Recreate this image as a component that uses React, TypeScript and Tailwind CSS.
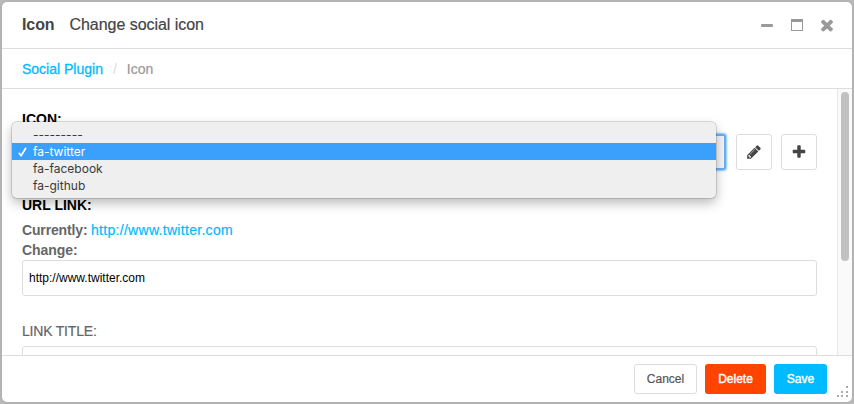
import { type ReactNode } from 'react'

const options = ['---------', 'fa-twitter', 'fa-facebook', 'fa-github']
const selected = 'fa-twitter'

const icons = {
  pencil:
    'M491 1536l91-91-235-235-91 91v107h128v128h107zm523-928q0-22-22-22-10 0-17 7l-542 542q-7 7-7 17 0 22 22 22 10 0 17-7l542-542q7-7 7-17zm-54-192l416 416-832 832h-416v-416zm683 96q0 53-37 90l-166 166-416-416 166-165q36-38 90-38 53 0 91 38l235 234q37 39 37 91z',
  plus: 'M1600 736v192q0 40-28 68t-68 28h-416v416q0 40-28 68t-68 28h-192q-40 0-68-28t-28-68v-416h-416q-40 0-68-28t-28-68v-192q0-40 28-68t68-28h416v-416q0-40 28-68t68-28h192q40 0 68 28t28 68v416h416q40 0 68 28t28 68z',
  times:
    'M1490 1322q0 40-28 68l-136 136q-28 28-68 28t-68-28l-294-294-294 294q-28 28-68 28t-68-28l-136-136q-28-28-28-68t28-68l294-294-294-294q-28-28-28-68t28-68l136-136q28-28 68-28t68 28l294 294 294-294q28-28 68-28t68 28l136 136q28 28 28 68t-28 68l-294 294 294 294q28 28 28 68z',
}

function Icon({ name, className }: { name: keyof typeof icons; className: string }) {
  return (
    <svg viewBox="0 0 1792 1792" fill="currentColor" className={className}>
      <path d={icons[name]} />
    </svg>
  )
}

function IconButton({ children }: { children: ReactNode }) {
  return (
    <button className="flex size-9 shrink-0 items-center justify-center rounded-[3px] border border-[#ddd] bg-white text-[#444]">
      {children}
    </button>
  )
}

function TitleBar() {
  return (
    <header className="flex h-[47px] shrink-0 items-center justify-between border-b border-[#ddd] pr-[16px] pl-5 text-[#444]">
      <h1 className="flex items-center gap-[15px] text-base leading-5">
        <strong className="tracking-[-0.1px]">Icon</strong>
        <span className="tracking-[-0.04px] [-webkit-text-stroke:0.2px]">Change social icon</span>
      </h1>
      <div className="flex items-center text-[#999]">
        <span className="mr-[18px] h-[3px] w-3 rounded-[1px] bg-[#999]" />
        <span className="mr-[15px] h-3 w-3 border border-t-[3px] border-[#999]" />
        <Icon name="times" className="size-[18px]" />
      </div>
    </header>
  )
}

function Breadcrumb() {
  return (
    <nav className="flex h-10 shrink-0 items-center border-b border-[#ddd] pl-5 text-sm text-[#999]">
      <a className="text-[#00bbff] [-webkit-text-stroke:0.3px]">Social Plugin</a>
      <span className="ml-[10px] text-[#ddd]">/</span>
      <span className="ml-[10px] [-webkit-text-stroke:0.2px]">Icon</span>
    </nav>
  )
}

function SelectMenu() {
  return (
    <ul className="absolute -top-3 -left-[10px] z-10 w-[704px] rounded-[5px] bg-[#efefef] py-1 font-['Inter','Noto_Sans',sans-serif] text-xs leading-[17px] text-[#3a3a3a] shadow-[0_0_0_1px_rgba(0,0,0,0.13),0_5px_12px_rgba(0,0,0,0.28)]">
      {options.map((option) => (
        <li
          key={option}
          className={option === selected ? 'flex h-[17px] bg-[#3b9ffc] text-white' : 'flex h-[17px]'}
        >
          <span className="flex w-[21px] items-center pl-[6px]">
            {option === selected && (
              <svg viewBox="0 0 9 10" className="h-[10px] w-[9px]" fill="none" stroke="white" strokeWidth="1.7">
                <path d="M0.8 5.8 3.1 8.7 8 0.8" />
              </svg>
            )}
          </span>
          {option}
        </li>
      ))}
    </ul>
  )
}

export default function App() {
  return (
    <div className="h-[404px] w-[854px] overflow-hidden bg-[#bdbdbd] p-0.5 font-['Liberation_Sans',Arial,sans-serif]">
      <div className="relative flex h-[400px] flex-col overflow-hidden rounded-[5px] bg-white shadow-[0_0_6px_rgba(0,0,0,0.15)]">
        <TitleBar />
        <Breadcrumb />

        <div className="flex h-[266px] shrink-0 overflow-hidden">
          <main className="w-[835px] pt-5 pr-5 pl-5 text-sm leading-5 text-[#666]">
            <div className="h-[25px] font-bold text-black">ICON:</div>
            <div className="relative flex">
              <div className="mr-[10px] h-9 w-[704px] rounded-[3px] border-2 border-[#68b0fb] bg-[#f5f5f5] shadow-[0_0_2px_1px_#8ec5fc]" />
              <IconButton>
                <Icon name="pencil" className="size-4" />
              </IconButton>
              <span className="w-[9px]" />
              <IconButton>
                <Icon name="plus" className="size-4" />
              </IconButton>
              <SelectMenu />
            </div>

            <div className="mt-[25px] font-bold text-black">URL LINK:</div>
            <div className="mt-[5px] flex">
              <strong className="w-[69px] tracking-[-0.15px]">Currently:</strong>
              <a className="tracking-[0.3px] text-[#00bbff] [-webkit-text-stroke:0.2px]">http://www.twitter.com</a>
            </div>
            <div className="font-bold tracking-[-0.05px]">Change:</div>
            <div className="flex h-9 items-center rounded-[3px] border border-[#ddd] px-[6px] text-xs text-black">
              http://www.twitter.com
            </div>

            <div className="mt-[25px] h-[25px] tracking-[-0.2px] [-webkit-text-stroke:0.2px]">LINK TITLE:</div>
            <div className="h-9 rounded-[3px] border border-[#ddd]" />
          </main>
          <div className="w-[15px] border-l border-[#e7e7e7] bg-[#fafafa] pt-[3px] pl-[3px]">
            <div className="h-[169px] w-2 rounded-full bg-[#c1c1c1]" />
          </div>
        </div>

        <footer className="flex flex-1 items-start justify-end gap-2 border-t border-[#ddd] pt-2 pr-[25px] text-xs">
          <button className="h-[30px] w-[63px] rounded-[3px] border border-[#ddd] text-[#555] [-webkit-text-stroke:0.2px]">
            Cancel
          </button>
          <button className="h-[30px] w-[61px] rounded-[3px] bg-[#ff4400] text-white [-webkit-text-stroke:0.4px]">
            Delete
          </button>
          <button className="h-[30px] w-[53px] rounded-[3px] bg-[#00bbff] text-white [-webkit-text-stroke:0.4px]">
            Save
          </button>
        </footer>

        {/* resize handle */}
        <svg viewBox="0 0 12 12" className="absolute right-[4px] bottom-[4px] size-3" fill="#aaa" shapeRendering="crispEdges">
          <rect x="10" y="0" width="1.5" height="2" />
          <rect x="5" y="5" width="2" height="1.5" />
          <rect x="10" y="5" width="1.5" height="1.5" />
          <rect x="1" y="9" width="1.5" height="2" />
          <rect x="5" y="9" width="2" height="2" />
          <rect x="10" y="9" width="1.5" height="2" />
        </svg>
      </div>
    </div>
  )
}
